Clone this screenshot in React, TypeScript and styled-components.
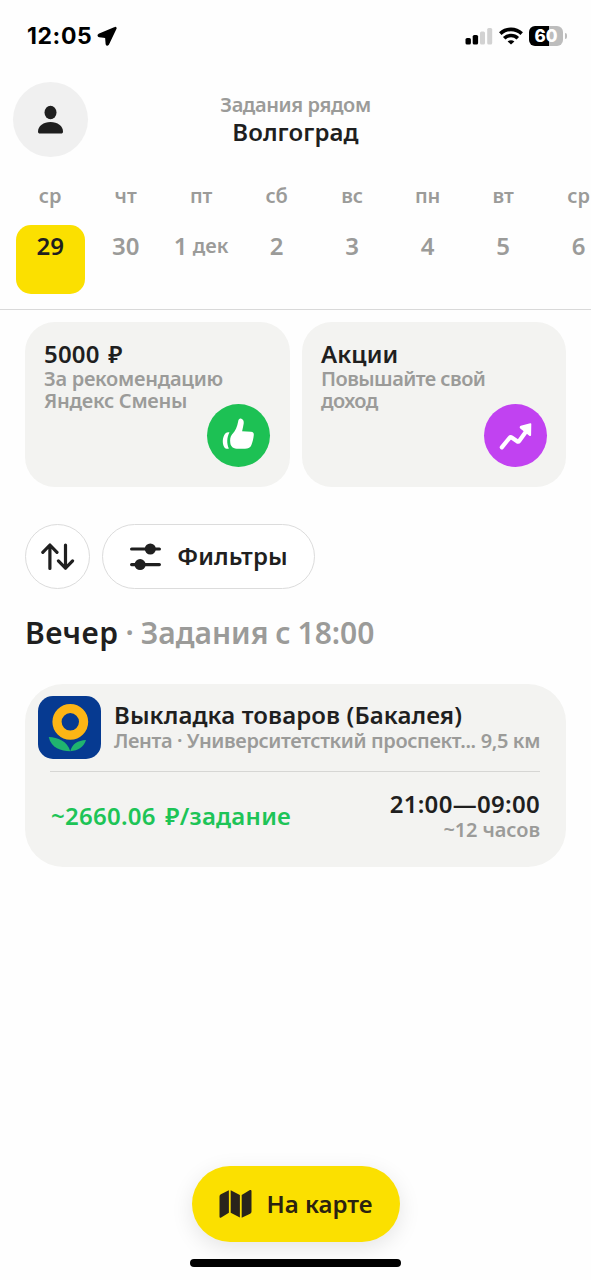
import React from "react";
import styled, { createGlobalStyle } from "styled-components";

const ink = "#1f1f1f";
const muted = "#9b9b99";
const panel = "#f3f3f1";
const yellow = "#fbe000";
const green = "#1dc457";

const GlobalStyle = createGlobalStyle`
  * { box-sizing: border-box; }
  body {
    margin: 0;
    background: #fefefe;
    color: ${ink};
    font-family: "Noto Sans", "Open Sans", sans-serif;
    font-weight: 600;
  }
  svg { display: block; flex: none; }
`;

const Screen = styled.div`
  width: 591px;
  height: 1280px;
  display: flex;
  flex-direction: column;
  overflow: hidden;
`;

const StatusBar = styled.div`
  height: 82px;
  padding: 24px 24px 0 27px;
  display: flex;
  justify-content: space-between;
  align-items: flex-start;
`;

const StatusGroup = styled.div<{ $gap: number }>`
  height: 24px;
  display: flex;
  align-items: center;
  gap: ${(p) => p.$gap}px;
`;

const Clock = styled.span`
  font: 700 23px/24px Inter, sans-serif;
  letter-spacing: 0.6px;
  color: #000;
`;

const Battery = styled.div`
  width: 34px;
  height: 20px;
  margin-right: 4px;
  border-radius: 6px;
  background: linear-gradient(90deg, #000 60%, #bdbdbd 60%);
  color: #fff;
  font: 800 17px/20px Inter, sans-serif;
  text-align: center;
  position: relative;

  &::after {
    content: "";
    position: absolute;
    right: -4px;
    top: 7px;
    width: 2px;
    height: 6px;
    border-radius: 0 3px 3px 0;
    background: #bdbdbd;
  }
`;

const Header = styled.header`
  height: 75px;
  padding: 0 13px;
  display: grid;
  grid-template-columns: 75px 1fr 75px;
`;

const Avatar = styled.div`
  width: 75px;
  height: 75px;
  border-radius: 50%;
  background: #f0f0f0;
  display: flex;
  align-items: center;
  justify-content: center;
`;

const Place = styled.div`
  padding-top: 10px;
  text-align: center;
`;

const PlaceHint = styled.div`
  font-size: 20px;
  line-height: 26px;
  letter-spacing: -0.4px;
  color: ${muted};
`;

const PlaceName = styled.div`
  font-size: 24px;
  line-height: 27px;
  letter-spacing: 0.1px;
`;

const Days = styled.nav`
  height: 153px;
  padding: 25px 0 0 12.4px;
  display: grid;
  grid-template-columns: repeat(8, 75.5px);
  border-bottom: 1px solid #d9d9d9;
  overflow: hidden;
`;

const Day = styled.div`
  display: flex;
  flex-direction: column;
  align-items: center;
  gap: 15px;
`;

const Weekday = styled.div`
  font-size: 20px;
  line-height: 28px;
  color: ${muted};
`;

const DateTile = styled.div<{ $active?: boolean }>`
  width: 69px;
  height: 69px;
  padding-top: 5px;
  border-radius: 15px;
  text-align: center;
  white-space: nowrap;
  font-size: 24px;
  line-height: 32px;
  background: ${(p) => (p.$active ? yellow : "transparent")};
  color: ${(p) => (p.$active ? ink : muted)};
`;

const Month = styled.span`
  font-size: 20px;
  line-height: 20px;
  vertical-align: 2px;
`;

const Content = styled.main`
  flex: 1;
  padding: 12px 25px 0;
`;

const Promos = styled.div`
  display: grid;
  grid-template-columns: 265px 264px;
  gap: 12px;
`;

const Promo = styled.article`
  height: 165px;
  padding: 17px 19px 20px;
  border-radius: 30px;
  background: ${panel};
  display: flex;
  flex-direction: column;
`;

const CardTitle = styled.div`
  font-size: 24px;
  line-height: 29px;
  letter-spacing: 0.1px;
  white-space: nowrap;
`;

const Amount = styled.span`
  letter-spacing: 0.2px;
  word-spacing: 2px;
`;

const PromoText = styled.div<{ $spacing: number }>`
  font-size: 20px;
  line-height: 22px;
  letter-spacing: ${(p) => p.$spacing}px;
  color: ${muted};
`;

const PromoBadge = styled.div<{ $color: string }>`
  width: 63px;
  height: 63px;
  margin: -8px 0 0 163px;
  flex: none;
  border-radius: 50%;
  background: ${(p) => p.$color};
`;

const Controls = styled.div`
  margin-top: 37px;
  display: flex;
  gap: 12px;
`;

const Pill = styled.button<{ $width: number }>`
  width: ${(p) => p.$width}px;
  height: 65px;
  padding: 0;
  border: 1px solid #dcdcdc;
  border-radius: 33px;
  background: #fff;
  color: ${ink};
  font: 600 24px/32px "Noto Sans", sans-serif;
  display: flex;
  align-items: center;
  justify-content: center;
  gap: 16px;
`;

const PillLabel = styled.span`
  padding-bottom: 2px;
  letter-spacing: 0.1px;
`;

const Section = styled.h2`
  margin: 23px 0 31px;
  font-size: 30px;
  line-height: 41px;
  font-weight: 600;
  letter-spacing: 0.45px;
  word-spacing: -1px;
  white-space: nowrap;
`;

const SectionNote = styled.span`
  letter-spacing: 0;
  color: ${muted};
`;

const Task = styled.article`
  height: 183px;
  padding: 12px 26px 0 13px;
  border-radius: 38px;
  background: ${panel};
`;

const TaskHead = styled.div`
  display: flex;
  gap: 13px;
`;

const TaskInfo = styled.div`
  flex: 1;
  min-width: 0;
  padding-top: 4px;
`;

const TaskMeta = styled.div`
  display: flex;
  justify-content: space-between;
  font-size: 20px;
  line-height: 24px;
  letter-spacing: -0.39px;
  color: ${muted};
  white-space: nowrap;
`;

const TaskFoot = styled.div`
  height: 94px;
  margin: 12px 0 0 12px;
  padding-bottom: 6px;
  border-top: 1px solid #d6d6d4;
  display: flex;
  justify-content: space-between;
  align-items: center;
`;

const Price = styled.div`
  padding: 1px 0 0 1px;
  font-size: 24px;
  line-height: 32px;
  letter-spacing: 0.25px;
  word-spacing: 3px;
  color: ${green};
`;

const Hours = styled.div`
  font-size: 24px;
  line-height: 28px;
  letter-spacing: 0.3px;
  text-align: right;
`;

const Duration = styled.div`
  font-size: 20px;
  line-height: 23px;
  letter-spacing: -0.1px;
  color: ${muted};
`;

const Footer = styled.footer`
  height: 114px;
  display: flex;
  flex-direction: column;
  align-items: center;
`;

const MapButton = styled.button`
  width: 208px;
  height: 76px;
  padding: 0;
  border: 0;
  border-radius: 38px;
  background: ${yellow};
  box-shadow: 0 6px 22px rgba(0, 0, 0, 0.1);
  color: #2b2210;
  font: 600 24px/32px "Noto Sans", sans-serif;
  display: flex;
  align-items: center;
  justify-content: center;
  gap: 15px;
`;

const HomeIndicator = styled.div`
  width: 211px;
  height: 8px;
  margin-top: 17px;
  border-radius: 4px;
  background: #000;
`;

const days = [
  { name: "ср", date: "29", active: true },
  { name: "чт", date: "30" },
  { name: "пт", date: "1", month: "дек" },
  { name: "сб", date: "2" },
  { name: "вс", date: "3" },
  { name: "пн", date: "4" },
  { name: "вт", date: "5" },
  { name: "ср", date: "6" },
];

const LocationIcon = () => (
  <svg width="20" height="20" viewBox="0 0 20 20">
    <path d="M18 1.700 1.900 8.600c-1 .5-.7 1.800.4 1.900l6.200.8c.3 0 .4.200.4.500l.5 6.100c.1 1.200 1.400 1.300 1.900.3L18.800 2.500c.3-.7-.2-1.100-.8-.8Z" fill="#000" stroke="#000" strokeWidth="1.600" strokeLinejoin="round" />
  </svg>
);

const SignalIcon = () => (
  <svg width="28" height="18" viewBox="0 0 28 18">
    <rect x="0.500" y="11" width="5.400" height="6.500" rx="1.600" fill="#000" />
    <rect x="7.700" y="8" width="5.400" height="9.500" rx="1.600" fill="#000" />
    <rect x="15" y="4.500" width="5" height="13" rx="1.500" fill="#d2d2d2" />
    <rect x="22.200" y="1" width="5" height="16.500" rx="1.500" fill="#d2d2d2" />
  </svg>
);

const WifiIcon = () => (
  <svg width="24" height="18" viewBox="0 0 24 18" fill="none" stroke="#000" strokeWidth="3.600">
    <path d="M1.300 6.600C7.300.9 16.700.9 22.700 6.600" />
    <path d="M5.200 11.200C9 7.500 15 7.500 18.800 11.200" />
    <path d="m12 17.500-3.400-3.100c1.900-1.600 4.900-1.600 6.800 0Z" fill="#000" stroke="none" />
  </svg>
);

const PersonIcon = () => (
  <svg width="26" height="29" viewBox="0 0 26 29" fill={ink}>
    <ellipse cx="12.500" cy="7.500" rx="6" ry="6.700" />
    <path d="M0 26.500c0-5.500 5.500-9.500 12.500-9.500S25 21 25 26.500c0 1.400-.7 2-2 2H2c-1.300 0-2-.6-2-2Z" />
  </svg>
);

const ThumbIcon = () => (
  <svg width="63" height="63" viewBox="0 0 63 63" fill="#fff">
    <path d="M25 30.500c3.400-3.300 5.200-7.500 6.200-13.200.4-2.300 1.600-3.200 3.200-2.600 1.900.7 2.600 2.300 2.300 4.800-.4 2.700-1.100 5.300-1.600 7.800l8.900.5c2 .1 3.100 1.300 2.800 3.200-.4 3.600-1.200 7-2.300 9.800-.8 2.200-2 3.400-4.500 3.600-2.800.3-5.300.4-8.500.4-5 0-7.700-1.900-8.200-5.900-.4-3.100-.1-6.300 1.700-8.400Z" />
    <path d="M18.300 29.500c1.200-1 2.500-1.400 4.200-1.100-2.700 4.700-3 11-.6 16.100-1.700.6-3.500.3-4.600-1.200-2.300-3.600-2-10.300 1-13.800Z" />
  </svg>
);

const TrendIcon = () => (
  <svg width="63" height="63" viewBox="0 0 63 63">
    <path d="m17.800 43.300 7.800-9.500c.7-.8 1.300-.9 2.100-.3l5.400 3.700c.8.600 1.500.5 2.100-.3l7.200-9.800" fill="none" stroke="#fff" strokeWidth="4.200" strokeLinecap="round" />
    <path d="m36.800 21.800 9.400-2.500c.7-.2 1.100.1 1.100.8l-.2 10.800c0 1.100-.9 1.500-1.800.9l-9-7.400c-1-.8-.7-2.200.5-2.600Z" fill="#fff" />
  </svg>
);

const SortIcon = () => (
  <svg width="34" height="28" viewBox="0 0 34 28" fill="none" stroke={ink} strokeWidth="3.200" strokeLinecap="round" strokeLinejoin="round">
    <path d="M8.900 25.500V2M1.800 9.300 8.900 2 16 9.300" />
    <path d="M24.500 2v23.200M17.400 17.900l7.100 7.300 7.100-7.300" />
  </svg>
);

const FilterIcon = () => (
  <svg width="32" height="28" viewBox="0 0 32 28">
    <path d="M2.600 6h27.800M2.600 21.600h27.800" stroke={ink} strokeWidth="3.200" strokeLinecap="round" />
    <circle cx="21.300" cy="6" r="5.500" fill={ink} />
    <circle cx="11.100" cy="21.600" r="5.500" fill={ink} />
  </svg>
);

const MapIcon = () => (
  <svg width="33" height="30" viewBox="0 0 33 30" fill="#29241c">
    <path d="M9.900 1.200v22.600L2.200 28.500C1.200 29 .5 28.600.5 27.500V7.800c0-1.200.4-2 1.400-2.600Z" />
    <path d="m11.700 1.200 9.200 4.700v22.600l-9.200-4.700Z" />
    <path d="m22.700 5.900 7.800-4.600c1.100-.6 2-.2 2 1v19.900c0 1.200-.4 1.900-1.400 2.500L22.700 28.800Z" />
  </svg>
);

const StoreLogo = () => (
  <svg width="63" height="63" viewBox="0 0 63 63">
    <rect width="63" height="63" rx="15" fill="#063a91" />
    <circle cx="32.300" cy="25.800" r="13.300" fill="none" stroke="#fdb515" strokeWidth="9.200" />
    <path d="M10.700 41c9.200.3 18.500 4 21.600 14.300C22.800 54.800 13.500 52.500 10.700 41Z" fill="#20b46f" />
    <path d="M48 44c-8.200.4-14 4-15.700 11.300C40.200 54.300 45.700 51.500 48 44Z" fill="#20b46f" />
  </svg>
);

export default function App() {
  return (
    <Screen>
      <GlobalStyle />
      <StatusBar>
        <StatusGroup $gap={5}>
          <Clock>12:05</Clock>
          <LocationIcon />
        </StatusGroup>
        <StatusGroup $gap={6}>
          <SignalIcon />
          <WifiIcon />
          <Battery>60</Battery>
        </StatusGroup>
      </StatusBar>

      <Header>
        <Avatar>
          <PersonIcon />
        </Avatar>
        <Place>
          <PlaceHint>Задания рядом</PlaceHint>
          <PlaceName>Волгоград</PlaceName>
        </Place>
      </Header>

      <Days>
        {days.map((day) => (
          <Day key={day.date}>
            <Weekday>{day.name}</Weekday>
            <DateTile $active={day.active}>
              {day.date}
              {day.month && <Month> {day.month}</Month>}
            </DateTile>
          </Day>
        ))}
      </Days>

      <Content>
        <Promos>
          <Promo>
            <CardTitle>
              <Amount>5000 ₽</Amount>
            </CardTitle>
            <PromoText $spacing={-0.28}>
              За рекомендацию
              <br />
              Яндекс Смены
            </PromoText>
            <PromoBadge $color="#1dc154">
              <ThumbIcon />
            </PromoBadge>
          </Promo>
          <Promo>
            <CardTitle>Акции</CardTitle>
            <PromoText $spacing={-0.55}>
              Повышайте свой
              <br />
              доход
            </PromoText>
            <PromoBadge $color="#c142f1">
              <TrendIcon />
            </PromoBadge>
          </Promo>
        </Promos>

        <Controls>
          <Pill $width={65} aria-label="Сортировка">
            <SortIcon />
          </Pill>
          <Pill $width={213}>
            <FilterIcon />
            <PillLabel>Фильтры</PillLabel>
          </Pill>
        </Controls>

        <Section>
          Вечер <SectionNote>· Задания с 18:00</SectionNote>
        </Section>

        <Task>
          <TaskHead>
            <StoreLogo />
            <TaskInfo>
              <CardTitle>Выкладка товаров (Бакалея)</CardTitle>
              <TaskMeta>
                <span>Лента · Университетсткий проспект...</span>
                <span>9,5 км</span>
              </TaskMeta>
            </TaskInfo>
          </TaskHead>
          <TaskFoot>
            <Price>~2660.06 ₽/задание</Price>
            <Hours>
              21:00—09:00
              <Duration>~12 часов</Duration>
            </Hours>
          </TaskFoot>
        </Task>
      </Content>

      <Footer>
        <MapButton>
          <MapIcon />
          На карте
        </MapButton>
        <HomeIndicator />
      </Footer>
    </Screen>
  );
}
